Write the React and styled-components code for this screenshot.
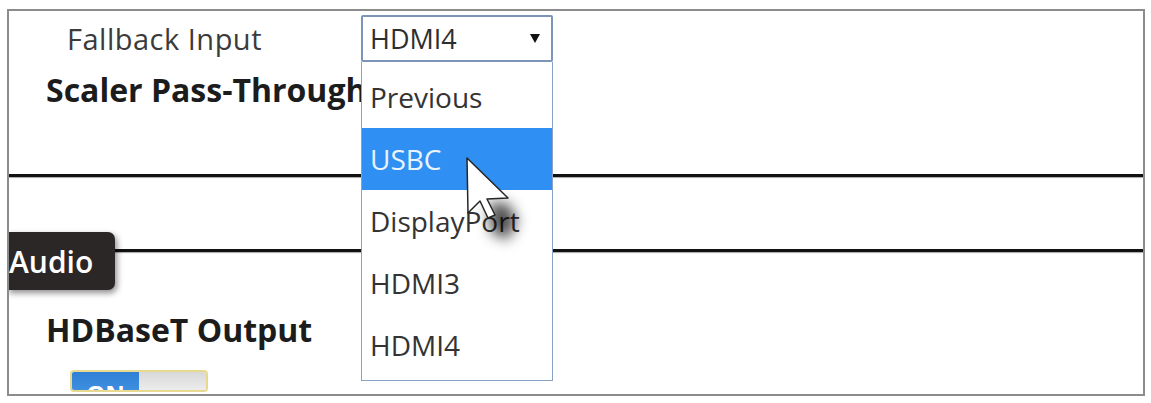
import React from "react";
import styled, { createGlobalStyle } from "styled-components";

const Global = createGlobalStyle`
  html, body { margin: 0; padding: 0; background: #fff; }
  body { font-family: "Open Sans", "Noto Sans", sans-serif; }
`;

const Page = styled.div`
  width: 1151px;
  height: 403px;
  padding: 9px 0 0 7px;
  box-sizing: border-box;
  overflow: hidden;
`;

const Frame = styled.div`
  position: relative;
  width: 1138px;
  height: 387px;
  box-sizing: border-box;
  border: 2px solid #8c8c8c;
  overflow: hidden;
  color: #333;
`;

const Section = styled.div`
  display: flex;
  flex-direction: column;
  align-items: flex-start;
  padding: ${(p) => p.$pad};
  height: ${(p) => p.$h}px;
  box-sizing: border-box;
`;

const FieldRow = styled.div`
  display: flex;
  align-items: center;
  padding-left: 58px;
`;

const Label = styled.span`
  width: 294px;
  font-size: 29px;
  letter-spacing: 0.5px;
  color: #3b3b3b;
`;

const Heading = styled.div`
  font-size: 32px;
  font-weight: 700;
  color: #1c1c1c;
  padding-left: ${(p) => p.$indent}px;
  margin-top: ${(p) => p.$top}px;
  white-space: nowrap;
`;

const SelectWrap = styled.div`
  position: relative;
`;

const SelectBox = styled.div`
  width: 192px;
  height: 47px;
  box-sizing: border-box;
  border: 2px solid #7c94b8;
  border-radius: 2px;
  display: flex;
  align-items: center;
  justify-content: space-between;
  padding: 0 11px 0 7px;
  font-size: 27px;
  color: #2e2e2e;
  background: #fff;
`;

const Caret = styled.span`
  width: 0;
  height: 0;
  border-left: 5px solid transparent;
  border-right: 5px solid transparent;
  border-top: 9px solid #111;
`;

const List = styled.ul`
  position: absolute;
  top: 100%;
  left: 0;
  z-index: 2;
  width: 192px;
  margin: 0;
  padding: 4px 0 4px;
  list-style: none;
  box-sizing: border-box;
  border: 1px solid #8aa3c4;
  border-top: none;
  background: #fff;
`;

const Option = styled.li`
  height: 62px;
  display: flex;
  align-items: center;
  padding-left: 8px;
  font-size: 28px;
  color: ${(p) => (p.$active ? "#e9f4ff" : "#333")};
  background: ${(p) => (p.$active ? "#2f8ff2" : "transparent")};
`;

const Rule = styled.hr`
  margin: 0;
  height: 3px;
  border: none;
  background: #111;
  box-shadow: 0 1px 1px rgba(0, 0, 0, 0.35);
`;

const Tab = styled.div`
  position: absolute;
  left: -2px;
  top: 221px;
  width: 108px;
  height: 58px;
  box-sizing: border-box;
  display: flex;
  align-items: center;
  padding-left: 2px;
  background: #2b2727;
  border-radius: 0 7px 7px 0;
  box-shadow: 2px 3px 6px rgba(0, 0, 0, 0.45);
  color: #fff;
  font-size: 30px;
  font-weight: 600;
  z-index: 1;
`;

const Toggle = styled.div`
  display: flex;
  margin: 19px 0 0 61px;
  width: 138px;
  height: 40px;
  box-sizing: border-box;
  border: 2px solid #e7d98f;
  border-radius: 4px;
  overflow: hidden;
`;

const ToggleHalf = styled.div`
  flex: 1;
  display: flex;
  align-items: flex-start;
  justify-content: center;
  padding-top: 10px;
  font-size: 24px;
  line-height: 1;
  font-weight: 700;
  color: #fff;
  background: ${(p) =>
    p.$on ? "linear-gradient(#2e7fd6, #3f8fe0)" : "linear-gradient(#d8d8d8, #ececec)"};
`;

const Pointer = styled.svg`
  position: absolute;
  left: 434px;
  top: 133px;
  z-index: 3;
  overflow: visible;
`;

const options = ["Previous", "USBC", "DisplayPort", "HDMI3", "HDMI4"];

export default function App() {
  return (
    <>
      <Global />
      <Page>
        <Frame>
          <Section $pad="4px 0 0 0" $h={163}>
            <FieldRow>
              <Label>Fallback Input</Label>
              <SelectWrap>
                <SelectBox>
                  HDMI4
                  <Caret />
                </SelectBox>
                <List>
                  {options.map((o) => (
                    <Option key={o} $active={o === "USBC"}>
                      {o}
                    </Option>
                  ))}
                </List>
              </SelectWrap>
            </FieldRow>
            <Heading $indent={37} $top={6}>Scaler Pass-Through</Heading>
          </Section>
          <Rule />
          <Section $pad="0" $h={72} />
          <Rule />
          <Section $pad="0" $h={140}>
            <Heading $indent={37} $top={56}>HDBaseT Output</Heading>
            <Toggle>
              <ToggleHalf $on>ON</ToggleHalf>
              <ToggleHalf />
            </Toggle>
          </Section>
          <Tab>Audio</Tab>
          <Pointer width="80" height="90" viewBox="0 0 80 90">
            <defs>
              <filter id="ptr-shadow" x="-80%" y="-80%" width="260%" height="260%">
                <feGaussianBlur stdDeviation="7" />
              </filter>
            </defs>
            <path
              d="M46 58 L66 60 L74 78 L64 96 L48 88 Z"
              fill="rgba(0,0,0,0.7)"
              filter="url(#ptr-shadow)"
            />
            <path
              d="M24 14 L25 69 L37 57 L45 74 L52 71 L44 55 L65 54 Z"
              fill="#fff"
              stroke="#262626"
              strokeWidth="1.5"
              strokeLinejoin="round"
            />
          </Pointer>
        </Frame>
      </Page>
    </>
  );
}
